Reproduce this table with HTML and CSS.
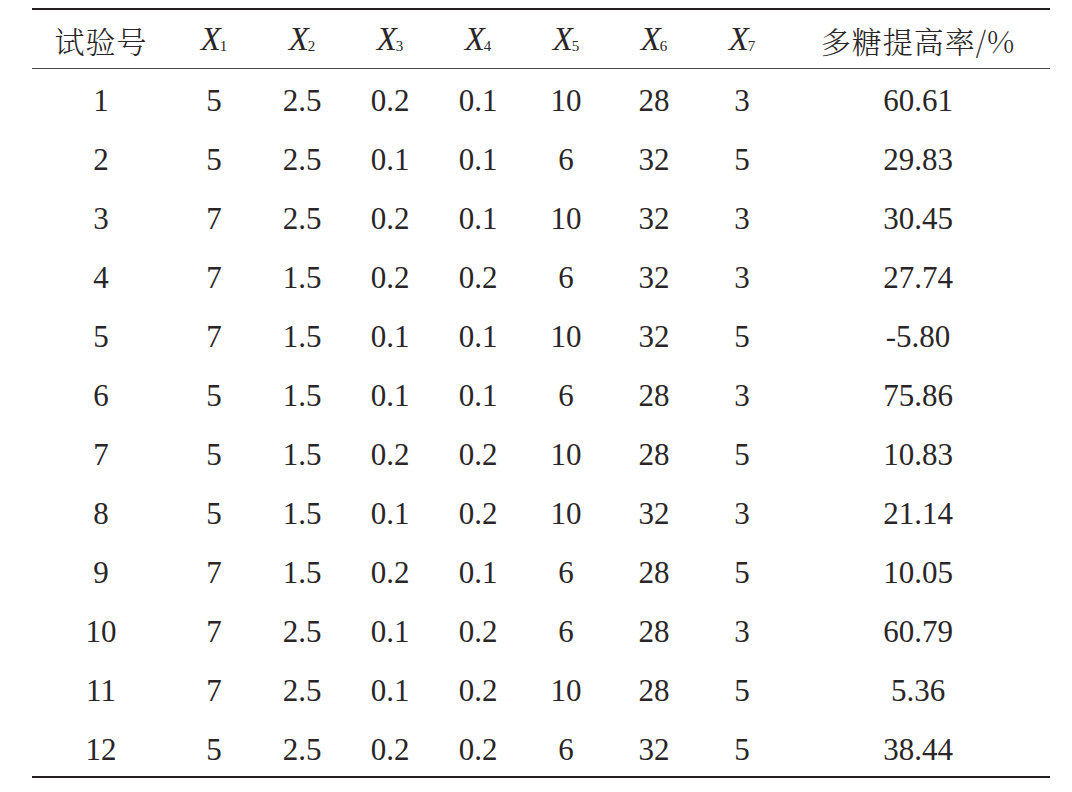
FILE: index.html
```html
<!DOCTYPE html>
<html lang="zh">
<head>
<meta charset="utf-8">
<title>试验结果</title>
<link rel="stylesheet" href="styles.css">
</head>
<body>
<table class="data">
  <colgroup>
    <col class="c-id"><col class="c-x"><col class="c-x"><col class="c-x"><col class="c-x"><col class="c-x"><col class="c-x"><col class="c-x"><col class="c-rate">
  </colgroup>
  <thead>
    <tr>
      <th class="cjk">试验号</th>
      <th><i>X</i><sub>1</sub></th>
      <th><i>X</i><sub>2</sub></th>
      <th><i>X</i><sub>3</sub></th>
      <th><i>X</i><sub>4</sub></th>
      <th><i>X</i><sub>5</sub></th>
      <th><i>X</i><sub>6</sub></th>
      <th><i>X</i><sub>7</sub></th>
      <th class="cjk">多糖提高率/%</th>
    </tr>
  </thead>
  <tbody>
    <tr><td>1</td><td>5</td><td>2.5</td><td>0.2</td><td>0.1</td><td>10</td><td>28</td><td>3</td><td>60.61</td></tr>
    <tr><td>2</td><td>5</td><td>2.5</td><td>0.1</td><td>0.1</td><td>6</td><td>32</td><td>5</td><td>29.83</td></tr>
    <tr><td>3</td><td>7</td><td>2.5</td><td>0.2</td><td>0.1</td><td>10</td><td>32</td><td>3</td><td>30.45</td></tr>
    <tr><td>4</td><td>7</td><td>1.5</td><td>0.2</td><td>0.2</td><td>6</td><td>32</td><td>3</td><td>27.74</td></tr>
    <tr><td>5</td><td>7</td><td>1.5</td><td>0.1</td><td>0.1</td><td>10</td><td>32</td><td>5</td><td>-5.80</td></tr>
    <tr><td>6</td><td>5</td><td>1.5</td><td>0.1</td><td>0.1</td><td>6</td><td>28</td><td>3</td><td>75.86</td></tr>
    <tr><td>7</td><td>5</td><td>1.5</td><td>0.2</td><td>0.2</td><td>10</td><td>28</td><td>5</td><td>10.83</td></tr>
    <tr><td>8</td><td>5</td><td>1.5</td><td>0.1</td><td>0.2</td><td>10</td><td>32</td><td>3</td><td>21.14</td></tr>
    <tr><td>9</td><td>7</td><td>1.5</td><td>0.2</td><td>0.1</td><td>6</td><td>28</td><td>5</td><td>10.05</td></tr>
    <tr><td>10</td><td>7</td><td>2.5</td><td>0.1</td><td>0.2</td><td>6</td><td>28</td><td>3</td><td>60.79</td></tr>
    <tr><td>11</td><td>7</td><td>2.5</td><td>0.1</td><td>0.2</td><td>10</td><td>28</td><td>5</td><td>5.36</td></tr>
    <tr><td>12</td><td>5</td><td>2.5</td><td>0.2</td><td>0.2</td><td>6</td><td>32</td><td>5</td><td>38.44</td></tr>
  </tbody>
</table>
</body>
</html>
```

FILE: styles.css
```css
html, body {
  margin: 0;
  padding: 0;
  background: #ffffff;
}

body {
  padding: 8px 0 0 32px;
  font-family: "Liberation Serif", "Noto Serif CJK SC", "Noto Sans CJK SC", serif;
  color: #2a2627;
}

.data {
  border-collapse: collapse;
  table-layout: fixed;
  width: 1016px;
  font-size: 31px;
  border-top: 2px solid #231f20;
  border-bottom: 2px solid #231f20;
}

.c-id { width: 138px; }
.c-x { width: 88px; }
.c-rate { width: 264px; }

.data th,
.data td {
  padding: 0;
  text-align: center;
  font-weight: normal;
  white-space: nowrap;
  line-height: 1;
}

.data thead th {
  height: 57px;
  border-bottom: 1px solid #4a4a4a;
  padding-top: 1px;
  vertical-align: middle;
}

.data tbody td {
  height: 59px;
  padding-top: 5px;
  box-sizing: border-box;
  vertical-align: middle;
}

.data th.cjk {
  font-family: "Noto Serif CJK SC", "Noto Sans CJK SC", serif;
  font-weight: 300;
  font-size: 30px;
  letter-spacing: 1px;
}

.data th i {
  font-style: italic;
  font-size: 33px;
}

.data th sub {
  font-size: 15px;
  vertical-align: baseline;
  position: relative;
  top: 1px;
  margin-left: -1px;
}
```
